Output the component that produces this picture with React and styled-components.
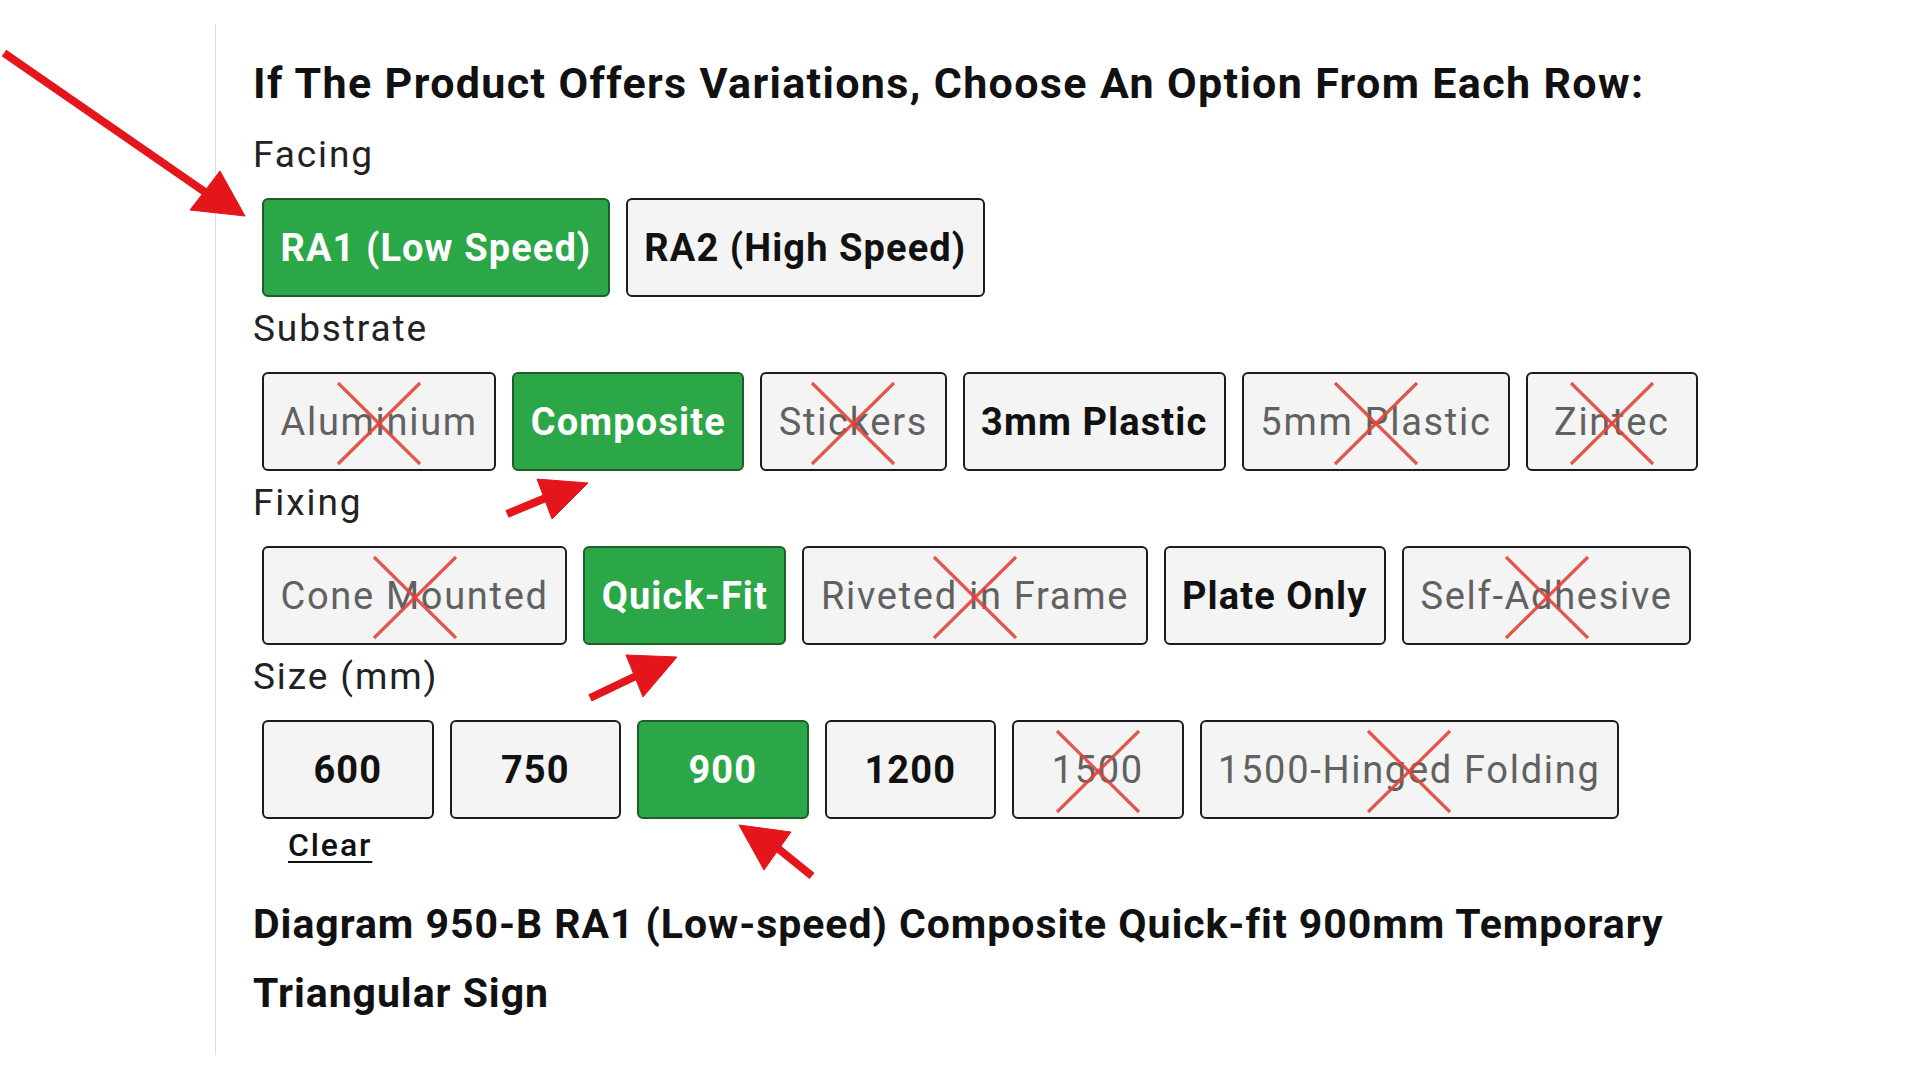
import React, { useState } from 'react';
import styled, { createGlobalStyle } from 'styled-components';

const GlobalStyle = createGlobalStyle`
    html, body {
        margin: 0;
        padding: 0;
        background: #ffffff;
        font-family: Roboto, "Liberation Sans", Arial, sans-serif;
        color: #111;
    }
`

const Page = styled.div`
    position: relative;
    width: 1920px;
    height: 1080px;
    overflow: hidden;
    padding-top: 24px;
    box-sizing: border-box;
`

const Panel = styled.div`
    margin-left: 215px;
    height: 1031px;
    border-left: 1px solid #dcdcdc;
    padding: 34px 0 0 37px;
    box-sizing: border-box;
`

const Heading = styled.h2`
    margin: 0 0 25px;
    font-size: 43px;
    line-height: 50px;
    font-weight: 700;
    letter-spacing: 1.35px;
    color: #111;
`

const Label = styled.div`
    font-size: 37px;
    line-height: 44px;
    font-weight: 400;
    letter-spacing: 1.9px;
    color: #222;
    margin-bottom: 21px;
`

const Row = styled.div`
    display: flex;
    gap: 16px;
    margin-left: 9px;
    margin-bottom: 10px;
`

const Option = styled.button`
    position: relative;
    height: 99px;
    min-width: 171.5px;
    padding: 0 16.5px;
    display: flex;
    align-items: center;
    justify-content: center;
    border: 2px solid ${p => (p.$selected ? '#1f5e2a' : '#1c1c1c')};
    border-radius: 6px;
    background: ${p => (p.$selected ? '#2ca747' : '#f4f4f4')};
    color: ${p => (p.$selected ? '#ffffff' : p.$disabled ? '#616161' : '#111')};
    font-family: Roboto, "Liberation Sans", Arial, sans-serif;
    font-size: 38px;
    font-weight: ${p => (p.$disabled ? 400 : 700)};
    letter-spacing: ${p => (p.$disabled ? '1.7px' : '1.1px')};
    cursor: ${p => (p.$disabled ? 'not-allowed' : 'pointer')};
    box-sizing: border-box;

    :focus {
        outline: none;
    }
`

const Cross = styled.svg`
    position: absolute;
    left: 50%;
    top: 7px;
    width: 90px;
    height: 85px;
    margin-left: -45px;
    pointer-events: none;
`

const Clear = styled.a`
    display: inline-block;
    margin: -2px 0 0 35px;
    font-size: 32px;
    line-height: 36px;
    font-weight: 500;
    letter-spacing: 1.9px;
    color: #111;
    text-decoration: underline;
    text-underline-offset: 5px;
    text-decoration-thickness: 2px;
`

const Title = styled.h1`
    margin: 27px 0 0;
    font-size: 41px;
    line-height: 69px;
    font-weight: 700;
    letter-spacing: 0.95px;
    color: #111;
    max-width: 1500px;
`

const Arrows = styled.svg`
    position: absolute;
    left: 0;
    top: 0;
    width: 1920px;
    height: 1080px;
    pointer-events: none;
`

const rows = [
    {
        name: 'Facing',
        options: [
            { label: 'RA1 (Low Speed)' },
            { label: 'RA2 (High Speed)' },
        ],
    },
    {
        name: 'Substrate',
        options: [
            { label: 'Aluminium', disabled: true },
            { label: 'Composite' },
            { label: 'Stickers', disabled: true },
            { label: '3mm Plastic' },
            { label: '5mm Plastic', disabled: true },
            { label: 'Zintec', disabled: true },
        ],
    },
    {
        name: 'Fixing',
        options: [
            { label: 'Cone Mounted', disabled: true },
            { label: 'Quick-Fit' },
            { label: 'Riveted in Frame', disabled: true },
            { label: 'Plate Only' },
            { label: 'Self-Adhesive', disabled: true },
        ],
    },
    {
        name: 'Size (mm)',
        options: [
            { label: '600' },
            { label: '750' },
            { label: '900' },
            { label: '1200' },
            { label: '1500', disabled: true },
            { label: '1500-Hinged Folding', disabled: true },
        ],
    },
]

function RedCross() {
    return (
        <Cross viewBox="0 0 90 85">
            <line x1="4" y1="2" x2="86" y2="83" stroke="#e0453a" strokeWidth="3.2" strokeOpacity="0.9" />
            <line x1="86" y1="2" x2="4" y2="83" stroke="#e0453a" strokeWidth="3.2" strokeOpacity="0.9" />
        </Cross>
    )
}

function Arrow({ tail, neck, tip, left, right }) {
    return (
        <g fill="#e4161c" stroke="#e4161c">
            <line x1={tail[0]} y1={tail[1]} x2={neck[0]} y2={neck[1]} strokeWidth="8" />
            <polygon points={`${tip[0]},${tip[1]} ${left[0]},${left[1]} ${right[0]},${right[1]}`} strokeWidth="1" />
        </g>
    )
}

function App() {
    const [picked, setPicked] = useState({
        'Facing': 'RA1 (Low Speed)',
        'Substrate': 'Composite',
        'Fixing': 'Quick-Fit',
        'Size (mm)': '900',
    });

    return (
        <Page>
            <GlobalStyle />
            <Panel>
                <Heading>If The Product Offers Variations, Choose An Option From Each Row:</Heading>
                {rows.map(row => (
                    <div key={row.name}>
                        <Label>{row.name}</Label>
                        <Row>
                            {row.options.map(opt => (
                                <Option
                                    key={opt.label}
                                    $disabled={opt.disabled}
                                    $selected={picked[row.name] === opt.label}
                                    onClick={() => !opt.disabled && setPicked({ ...picked, [row.name]: opt.label })}
                                >
                                    {opt.label}
                                    {opt.disabled && <RedCross />}
                                </Option>
                            ))}
                        </Row>
                    </div>
                ))}
                <Clear href="#" onClick={e => { e.preventDefault(); setPicked({}); }}>Clear</Clear>
                <Title>Diagram 950-B RA1 (Low-speed) Composite Quick-fit 900mm Temporary Triangular Sign</Title>
            </Panel>
            <Arrows viewBox="0 0 1920 1080">
                <Arrow tail={[4, 53]} neck={[205, 192]} tip={[245, 216]} left={[190, 210]} right={[220, 171]} />
                <Arrow tail={[507, 514]} neck={[548, 497]} tip={[588, 483]} left={[537, 479]} right={[552, 519]} />
                <Arrow tail={[590, 698]} neck={[636, 676]} tip={[677, 657]} left={[626, 655]} right={[643, 697]} />
                <Arrow tail={[812, 876]} neck={[770, 842]} tip={[739, 825]} left={[791, 832]} right={[764, 870]} />
            </Arrows>
        </Page>
    )
}

export default App;
